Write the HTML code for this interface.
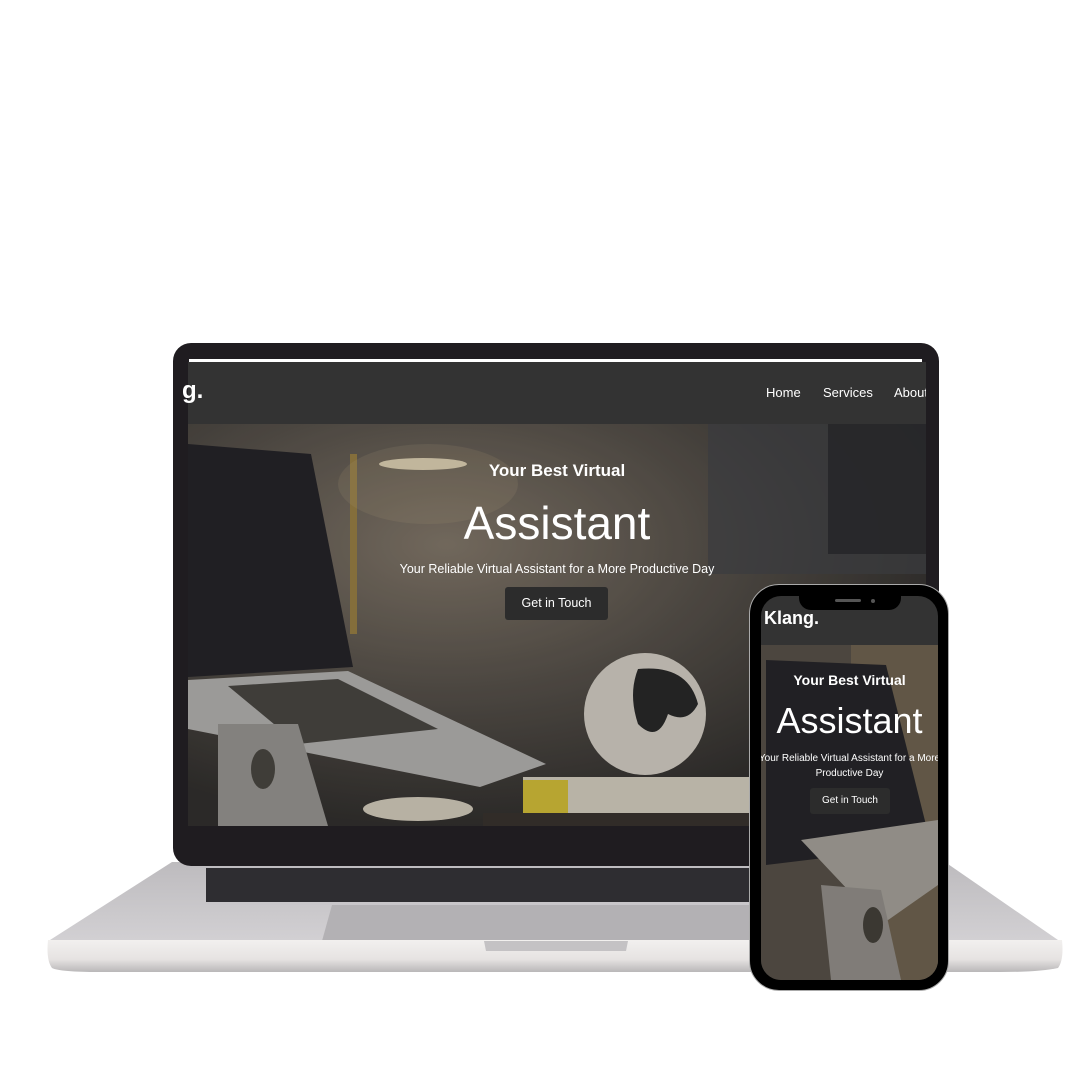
<!DOCTYPE html>
<html><head><meta charset="utf-8"><style>
*{margin:0;padding:0;box-sizing:border-box}
body{width:1080px;height:1080px;background:#fff;position:relative;overflow:hidden;font-family:"Liberation Sans",sans-serif}
.a{position:absolute}
.t{color:#fff;text-align:center;position:absolute;white-space:nowrap}
</style></head><body>
<svg class="a" style="left:0;top:0" width="1080" height="1080">
 <defs>
  <linearGradient id="deck" x1="0" y1="0" x2="0" y2="1"><stop offset="0" stop-color="#bdbbbe"/><stop offset="1" stop-color="#d2d0d3"/></linearGradient>
  <linearGradient id="front" x1="0" y1="0" x2="0" y2="1"><stop offset="0" stop-color="#f2f0ef"/><stop offset="0.6" stop-color="#e6e3e2"/><stop offset="1" stop-color="#b9b7b8"/></linearGradient>
 </defs>
 <path d="M172 862 L945 862 L1058 940 L50 940 Z" fill="url(#deck)"/>
 <path d="M206 868 L752 868 L752 902 L206 902 Z" fill="#2e2d31"/>
 <path d="M332 905 L752 905 L752 941 L322 941 Z" fill="#b3b1b4"/>
 <path d="M48 940 L1062 940 Q1064 960 1058 968 Q1040 972 1000 972 L100 972 Q60 972 52 968 Q46 960 48 940Z" fill="url(#front)"/>
 <path d="M484 941 L628 941 L626 951 L486 951 Z" fill="#c4c2c4"/>
</svg>
<div class="a" style="left:173px;top:343px;width:766px;height:523px;background:#1f1c20;border-radius:18px"></div>
<div class="a" style="left:189px;top:359px;width:733px;height:3px;background:#fff"></div>
<div class="a" style="left:188px;top:362px;width:738px;height:62px;background:#333"></div>
<div class="t" style="left:182px;top:377px;font-size:24px;font-weight:bold">g.</div>
<div class="t" style="left:766px;top:385px;font-size:13px">Home</div>
<div class="t" style="left:823px;top:385px;font-size:13px">Services</div>
<div class="t" style="left:894px;top:385px;font-size:13px;width:32px;overflow:hidden;text-align:left">About</div>
<svg class="a" style="left:188px;top:424px" width="738" height="402">
 <defs>
  <radialGradient id="glow" cx="0.35" cy="0.3" r="0.7"><stop offset="0" stop-color="#857a6c"/><stop offset="0.5" stop-color="#5a544d"/><stop offset="1" stop-color="#33312f"/></radialGradient>
 </defs>
 <rect width="738" height="402" fill="url(#glow)"/>
 <rect x="520" y="0" width="218" height="150" fill="#45464a" opacity="0.7"/>
 <rect x="640" y="0" width="98" height="130" fill="#2a2b2e" opacity="0.8"/>
 <rect x="162" y="30" width="7" height="180" fill="#9c8246"/>
 <ellipse cx="235" cy="40" rx="44" ry="6" fill="#e8dcc0"/>
 <ellipse cx="240" cy="60" rx="90" ry="40" fill="#c9b48a" opacity="0.15"/>
 <path d="M0 20 L123 30 L165 243 L0 253Z" fill="#26252a"/>
 <path d="M0 256 L160 247 L358 340 L292 363 L0 305Z" fill="#b7b5b3"/>
 <path d="M40 262 L150 255 L250 305 L110 320Z" fill="#4a4844"/>
 <path d="M30 300 L110 300 L140 402 L30 402Z" fill="#9a9894"/>
 <ellipse cx="75" cy="345" rx="12" ry="20" fill="#4b4842"/>
 <circle cx="457" cy="290" r="61" fill="#d7d2c8"/>
 <path d="M450 245 Q500 240 510 280 Q500 300 480 290 Q470 320 450 300 Q440 270 450 245Z" fill="#2a2a2a"/>
 <ellipse cx="230" cy="385" rx="55" ry="12" fill="#d8d0c0"/>
 <rect x="335" y="353" width="226" height="36" fill="#d9d3c4"/>
 <rect x="335" y="356" width="45" height="33" fill="#d8c23a"/>
 <rect x="295" y="389" width="270" height="13" fill="#3a342f"/>
 <rect width="738" height="402" fill="rgba(0,0,0,0.15)"/>
</svg>
<div class="t" style="left:188px;width:738px;top:461px;font-size:17px;font-weight:bold">Your Best Virtual</div>
<div class="t" style="left:188px;width:738px;top:496px;font-size:46px;font-weight:300">Assistant</div>
<div class="t" style="left:188px;width:738px;top:562px;font-size:12.5px">Your Reliable Virtual Assistant for a More Productive Day</div>
<div class="a" style="left:505px;top:587px;width:103px;height:33px;background:#2c2c2c;border-radius:3px;color:#fff;font-size:12.5px;text-align:center;line-height:33px">Get in Touch</div>
<div class="a" style="left:749px;top:584px;width:200px;height:407px;background:#000;border-radius:30px;border:1px solid #aaa"></div>
<div class="a" style="left:761px;top:596px;width:177px;height:384px;border-radius:20px;overflow:hidden;background:#333">
 <svg class="a" style="left:0;top:49px" width="177" height="335">
  <rect width="177" height="335" fill="#5f584f"/>
  <rect x="90" y="0" width="87" height="335" fill="#7a6c58"/>
  <path d="M5 15 L125 20 L170 200 L5 220Z" fill="#2a292d"/>
  <path d="M40 195 L177 175 L177 240 L120 280Z" fill="#b4b0a8"/>
  <path d="M60 240 L120 245 L140 335 L70 335Z" fill="#a09c96"/>
  <ellipse cx="112" cy="280" rx="10" ry="18" fill="#4a463f"/>
  <rect width="177" height="335" fill="rgba(0,0,0,0.2)"/>
 </svg>
 <div class="t" style="left:3px;top:12px;font-size:18px;font-weight:bold">Klang.</div>
 <div class="t" style="left:0;width:177px;top:76px;font-size:14px;font-weight:bold">Your Best Virtual</div>
 <div class="t" style="left:-10px;width:197px;top:104px;font-size:36px;font-weight:300">Assistant</div>
 <div class="t" style="left:-30px;width:237px;top:157px;font-size:10px">Your Reliable Virtual Assistant for a More</div>
 <div class="t" style="left:0;width:177px;top:172px;font-size:10px">Productive Day</div>
 <div class="a" style="left:49px;top:192px;width:80px;height:26px;background:#2c2c2c;border-radius:3px;color:#fff;font-size:10px;text-align:center;line-height:26px">Get in Touch</div>
</div>
<div class="a" style="left:799px;top:594px;width:102px;height:16px;background:#000;border-radius:0 0 12px 12px"></div>
<div class="a" style="left:835px;top:599px;width:26px;height:3px;background:#555;border-radius:2px"></div>
<div class="a" style="left:871px;top:599px;width:4px;height:4px;background:#555;border-radius:50%"></div>
</body></html>
